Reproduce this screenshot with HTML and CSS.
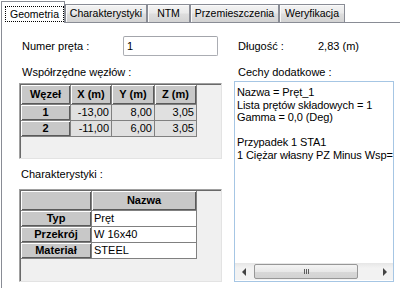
FILE: index.html
```html
<!doctype html>
<html lang="pl">
  <head>
    <meta charset="UTF-8" />
    <title>Geometria</title>
    <link rel="stylesheet" href="styles.css">
  </head>
  <body>
    <div class="tabs">
      <div class="tab tab-active"><span class="focus">Geometria</span></div>
      <div class="tab tab-char">Charakterystyki</div>
      <div class="tab tab-ntm">NTM</div>
      <div class="tab tab-disp">Przemieszczenia</div>
      <div class="tab tab-check">Weryfikacja</div>
      <div class="tab-fill"></div>
    </div>

    <div class="page">
      <div class="col col-left">
        <div class="field">
          <span class="field-label">Numer pręta :</span>
          <input class="edit" type="text" value="1">
        </div>

        <div class="caption">Współrzędne węzłów :</div>
        <div class="grid grid-nodes">
          <div class="cells cells-nodes">
            <div class="hd">Węzeł</div>
            <div class="hd">X (m)</div>
            <div class="hd">Y (m)</div>
            <div class="hd">Z (m)</div>

            <div class="hd">1</div>
            <div class="cell num">-13,00</div>
            <div class="cell num">8,00</div>
            <div class="cell num">3,05</div>

            <div class="hd">2</div>
            <div class="cell num">-11,00</div>
            <div class="cell num">6,00</div>
            <div class="cell num">3,05</div>
          </div>
        </div>

        <div class="caption caption-char">Charakterystyki :</div>
        <div class="grid grid-props">
          <div class="cells cells-props">
            <div class="hd"></div>
            <div class="hd">Nazwa</div>

            <div class="hd">Typ</div>
            <div class="cell text">Pręt</div>

            <div class="hd">Przekrój</div>
            <div class="cell text">W 16x40</div>

            <div class="hd">Materiał</div>
            <div class="cell text">STEEL</div>
          </div>
        </div>
      </div>

      <div class="col col-right">
        <div class="field field-right">
          <span class="field-label field-label-short">Długość :</span>
          <span>2,83 (m)</span>
        </div>

        <div class="caption caption-right">Cechy dodatkowe :</div>
        <div class="memo">
          <div class="memo-text">Nazwa = Pręt_1
Lista prętów składowych = 1
Gamma = 0,0 (Deg)

Przypadek 1 STA1
1 Ciężar własny PZ Minus Wsp=</div>
          <div class="hscroll">
            <div class="sb-btn"><span class="arrow-left"></span></div>
            <div class="sb-thumb"><span class="grip"></span></div>
            <div class="sb-track"></div>
            <div class="sb-btn"><span class="arrow-right"></span></div>
          </div>
        </div>
      </div>
    </div>
  </body>
</html>
```

FILE: styles.css
```css
body {
  margin: 0;
  width: 400px;
  height: 288px;
  overflow: hidden;
  background-color: #fff;
  font-family: "Liberation Sans", Arial, sans-serif;
  font-size: 11px;
  color: #000;
}

/* tab strip */
.tabs {
  display: flex;
  align-items: flex-end;
  height: 23px;
  padding-left: 1px;
}
.tab {
  box-sizing: border-box;
  height: 19px;
  border: 1px solid #898c95;
  background: linear-gradient(#f3f3f3, #eaeaea 45%, #dddddd 55%, #d3d3d3);
  box-shadow: inset 1px 1px 0 #fafafa;
  font-size: 10.5px;
  line-height: 17px;
  text-align: center;
  white-space: nowrap;
}
.tab-active {
  width: 64px;
  height: 22px;
  border-bottom: none;
  background: #fff;
  box-shadow: none;
  padding: 4px 0 1px 3px;
}
.focus {
  display: block;
  height: 16px;
  box-sizing: border-box;
  border: 1px dotted #000;
  line-height: 14px;
}
.tab-char { width: 82px; }
.tab-ntm { width: 43px; }
.tab-disp { width: 89px; }
.tab-check { width: 66px; }
.tab-fill {
  flex: 1;
  border-bottom: 1px solid #898c95;
}

/* tab page */
.page {
  display: flex;
  gap: 12px;
  height: 265px;
  margin-left: 1px;
  border-left: 1px solid #898c95;
  padding: 13px 0 0 17px;
  overflow: hidden;
}
.col {
  display: flex;
  flex-direction: column;
}
.col-left { width: 203px; }
.col-right { width: 160px; }

.field {
  display: flex;
  align-items: center;
  height: 20px;
  padding-left: 3px;
}
.field-right { padding-left: 4px; }
.field-label { width: 101px; }
.field-label-short { width: 80px; }
.edit {
  box-sizing: border-box;
  width: 95px;
  height: 20px;
  margin: 0;
  padding: 0 3px;
  border: 1px solid #abadb3;
  border-top-color: #a3a5ab;
  border-radius: 2px;
  font-family: inherit;
  font-size: 11px;
  color: #000;
}

.caption {
  margin-top: 10px;
  padding-left: 3px;
  line-height: 13px;
}
.caption-right { padding-left: 4px; }
.caption-char {
  margin-top: 9px;
  padding-left: 2px;
}

/* grids */
.grid {
  box-sizing: border-box;
  margin-top: 4px;
  padding: 1px 0 0 1px;
  border: 1px solid #a0a0a0;
  border-right-color: #e3e3e3;
  border-bottom-color: #e3e3e3;
  box-shadow: inset 1px 1px 0 #696969;
  background-color: #f0f0f0;
}
.grid-nodes { height: 76px; }
.grid-props {
  height: 93px;
  margin-top: 8px;
}
.cells {
  display: grid;
  width: max-content;
  gap: 1px;
  padding: 0 1px 1px 0;
  grid-template-rows: 19px;
  grid-auto-rows: 15px;
  background-color: #808080;
}
.cells-nodes { grid-template-columns: 49px 40px 42px 41px; }
.cells-props { grid-template-columns: 70px 104px; }

.hd {
  background-color: #c8c8c8;
  box-shadow: inset 1px 1px 0 #fff, inset -1px -1px 0 #5a5a5a;
  font-weight: bold;
  text-align: center;
  line-height: 15px;
}
.cells > .hd:nth-child(-n+4) { line-height: 19px; }
.cells-props > .hd:nth-child(n+3) { line-height: 15px; }
.cell {
  line-height: 15px;
  white-space: nowrap;
}
.num {
  background-color: #e0e0e0;
  text-align: right;
  padding-right: 2px;
}
.text {
  background-color: #fff;
  padding-left: 2px;
}

/* multi-line text box */
.memo {
  box-sizing: border-box;
  display: flex;
  flex-direction: column;
  height: 201px;
  margin-top: 2px;
  border: 1px solid #a6c6e4;
  background-color: #fff;
}
.memo-text {
  flex: 1;
  padding: 4px 0 0 2px;
  white-space: pre;
  overflow: hidden;
  line-height: 12.5px;
  letter-spacing: -0.1px;
}
.hscroll {
  display: flex;
  height: 17px;
  margin-bottom: 1px;
  background: linear-gradient(#e6e6e6, #f2f2f2 30%, #f2f2f2);
}
.sb-btn {
  display: flex;
  align-items: center;
  justify-content: center;
  width: 17px;
}
.arrow-left,
.arrow-right {
  width: 0;
  height: 0;
  border-top: 4px solid transparent;
  border-bottom: 4px solid transparent;
}
.arrow-left { border-right: 4px solid #444; }
.arrow-right { border-left: 4px solid #444; }
.sb-thumb {
  box-sizing: border-box;
  display: flex;
  align-items: center;
  justify-content: center;
  width: 104px;
  height: 15px;
  margin: 1px 0 0 2px;
  border: 1px solid #979797;
  border-radius: 2px;
  background: linear-gradient(#f4f4f4, #e8e8e8 50%, #d8d8d8 50%, #d2d2d2);
}
.grip {
  width: 5px;
  height: 5px;
  background: linear-gradient(to right, #5c5c5c 1px, transparent 1px 2px, #5c5c5c 2px 3px, transparent 3px 4px, #5c5c5c 4px);
}
.sb-track { flex: 1; }
```
